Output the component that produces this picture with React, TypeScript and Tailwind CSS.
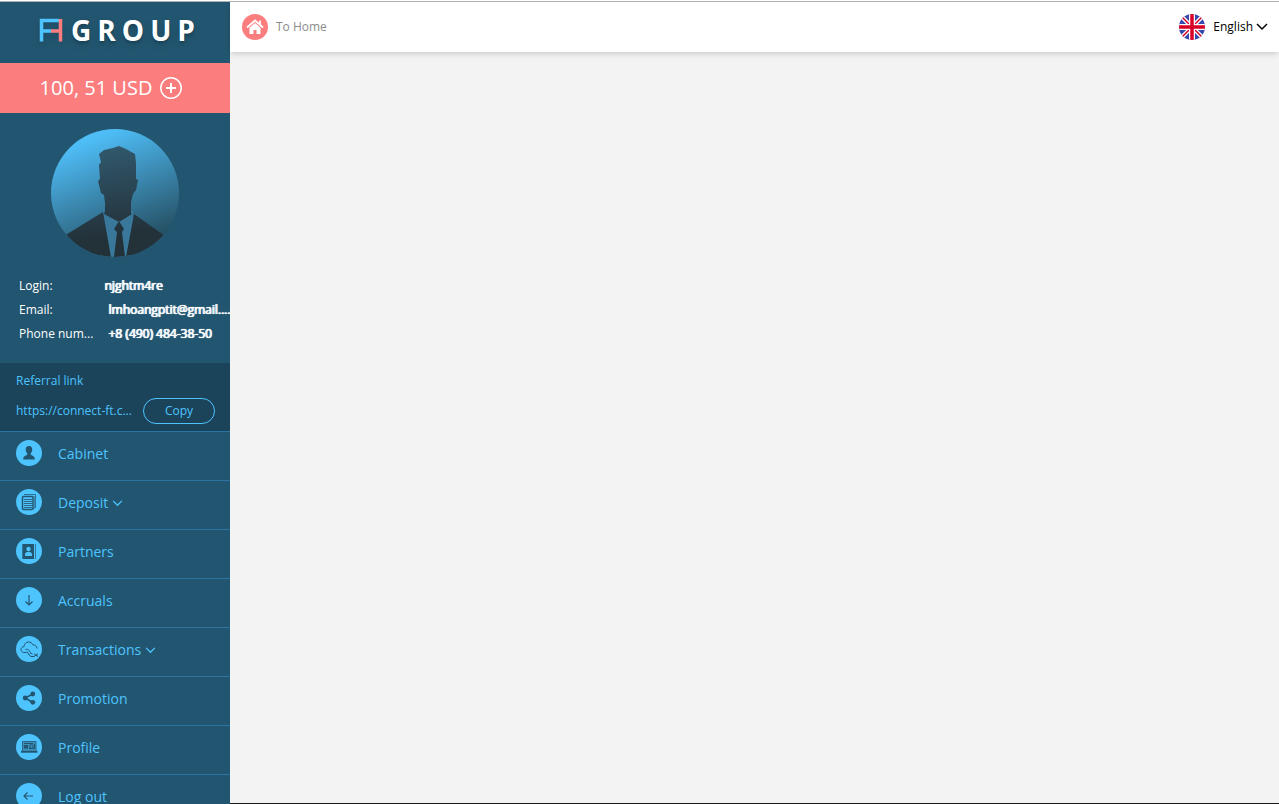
import type { ReactNode } from "react";

interface MenuItem {
  label: string;
  icon: ReactNode;
  expandable?: boolean;
}

const menuItems: MenuItem[] = [
  { label: "Cabinet", icon: <UserIcon /> },
  { label: "Deposit", icon: <DocumentsIcon />, expandable: true },
  { label: "Partners", icon: <ContactsIcon /> },
  { label: "Accruals", icon: <ArrowDownIcon /> },
  { label: "Transactions", icon: <CloudIcon />, expandable: true },
  { label: "Promotion", icon: <ShareIcon /> },
  { label: "Profile", icon: <LaptopIcon /> },
  { label: "Log out", icon: <ArrowLeftIcon /> },
];

function UserIcon() {
  return (
    <svg viewBox="0 0 26 26" className="size-full" fill="#22556f">
      <path d="M13 6c2.300 0 3.300 1.500 3.300 3.600 0 1.500-.7 3-1.500 3.700v1.500c1.800.8 4 1.600 4 4v.7H7.200v-.7c0-2.400 2.200-3.200 4-4v-1.500c-.8-.7-1.500-2.200-1.500-3.700C9.700 7.500 10.700 6 13 6z" />
    </svg>
  );
}

function DocumentsIcon() {
  return (
    <svg viewBox="0 0 26 26" className="size-full" fill="none">
      <path d="M8 5.500h11.500V19" stroke="#2f7194" />
      <path d="M18.500 7v13" stroke="#3a8fbb" />
      <rect
        x="6.500"
        y="7.500"
        width="10.500"
        height="13"
        rx="1"
        fill="#4ec4ff"
        stroke="#22556f"
        strokeWidth="1.500"
      />
      <path
        d="M8 10.500h8M8 12.500h8M8 14.500h8M8 16.500h8M8 18.500h8"
        stroke="#2b6688"
      />
    </svg>
  );
}

function ContactsIcon() {
  return (
    <svg viewBox="0 0 26 26" className="size-full">
      <rect x="7" y="6" width="11" height="15" fill="#22556f" />
      <path d="M6.500 6v15M19.500 6v15" stroke="#3478a0" strokeWidth="1" />
      <circle cx="12.500" cy="11" r="2.200" fill="#4ec4ff" />
      <path d="M9 18v-1.500c0-2 1.500-2.800 3.500-2.800s3.500.8 3.500 2.800V18z" fill="#4ec4ff" />
    </svg>
  );
}

function ArrowDownIcon() {
  return (
    <svg viewBox="0 0 26 26" className="size-full" fill="none" stroke="#22556f">
      <path d="M13 8v10M9.500 14.500L13 18l3.500-3.500" strokeWidth="1.200" />
    </svg>
  );
}

function ArrowLeftIcon() {
  return (
    <svg viewBox="0 0 26 26" className="size-full" fill="none" stroke="#22556f">
      <path d="M17 13H8M11.500 9.500L8 13l3.500 3.500" strokeWidth="1.200" />
    </svg>
  );
}

function CloudIcon() {
  return (
    <svg viewBox="0 0 26 26" className="size-full" fill="none" stroke="#22556f">
      <path d="M10.500 16.500H7.800C6 16.300 5 15 5 13.600c0-1.600 1.200-2.700 2.900-2.900C8.200 8 10 6 12.500 6c2 0 3.500 1 4.200 2.700 2.600-.1 4.300 1.600 4.300 3.800" />
      <path d="M9.500 13.500c1.500-.6 3 0 3.500 1l1.500 2M11 15.500l2 3.500 2 1.500h3M14 17l2.500 1M18 17.800l4 2.700M22 17.800l-4 2.700" />
    </svg>
  );
}

function ShareIcon() {
  return (
    <svg viewBox="0 0 26 26" className="size-full" fill="#22556f">
      <path d="M17 9L9 13l8 4.500" fill="none" stroke="#22556f" strokeWidth="1.500" />
      <circle cx="16.800" cy="9" r="2.400" />
      <circle cx="9.200" cy="13" r="2.400" />
      <circle cx="16.800" cy="17.300" r="2.400" />
    </svg>
  );
}

function LaptopIcon() {
  return (
    <svg viewBox="0 0 26 26" className="size-full" fill="none" stroke="#22556f">
      <path d="M6.500 17V7.500h13.500V17" fill="#3a8fbb" stroke="#2b6688" />
      <path d="M5 17.800h16.500" strokeWidth="1.800" />
      <path d="M8 11h4v3.500H8z" fill="#22556f" stroke="none" />
      <path d="M8 9.500h9M13 14.500h5.500v-4.500" />
      <circle cx="15.500" cy="12.500" r="1.800" />
    </svg>
  );
}

function ChevronIcon({ className }: { className: string }) {
  return (
    <svg
      viewBox="0 0 12 8"
      className={className}
      fill="none"
      stroke="currentColor"
      strokeWidth="1.500"
    >
      <path d="M1 1l5 5 5-5" />
    </svg>
  );
}

function Logo() {
  return (
    <a
      href="#"
      className="flex h-[61px] shrink-0 items-center justify-center gap-2 pb-1.5 pl-1 text-white"
    >
      <svg
        viewBox="0 0 24 24"
        className="size-6 drop-shadow-md"
        fill="none"
        strokeWidth="3.500"
      >
        <path d="M2.500 23.500V2.500H20M4 13h8" stroke="#4ec4ff" />
        <path d="M12 13h8M21.500 1v22.500" stroke="#fb7d7e" />
      </svg>
      <span className="flex gap-1.5 text-[28px] leading-8 font-bold text-shadow-lg">
        <span>G</span>
        <span>R</span>
        <span>O</span>
        <span>U</span>
        <span>P</span>
      </span>
    </a>
  );
}

function Avatar() {
  return (
    <svg viewBox="0 0 128 128" className="mx-auto mt-4 size-32">
      <defs>
        <linearGradient id="avatar-bg" x1="0.3" y1="0" x2="0.7" y2="1">
          <stop offset="0.080" stopColor="#4ebcf5" />
          <stop offset="0.900" stopColor="#265064" />
        </linearGradient>
        <linearGradient id="avatar-man" x1="0.4" y1="0" x2="0.600" y2="1">
          <stop offset="0" stopColor="#31596e" />
          <stop offset="0.800" stopColor="#233139" />
        </linearGradient>
        <clipPath id="avatar-clip">
          <circle cx="64" cy="64" r="64" />
        </clipPath>
      </defs>
      <g clipPath="url(#avatar-clip)">
        <rect width="128" height="128" fill="url(#avatar-bg)" />
        <path d="M52 82L46 128h36V82z" fill="#39789a" />
        <path
          d="M48 25l5-4 9-2 6-2 7 3 9 5 1 9v16l2 1-2 10-3 4-2 8v11l1 1-13 8-15-8 1-3V74l-1-8-3-2-3-12 2-2-1-14 2-3z M52 83L0 115v13h60zM83 85l45 32v11H75z M68 92l-5 8 3 3-3 25h11l-3-25 2-3z"
          fill="url(#avatar-man)"
        />
      </g>
    </svg>
  );
}

function UkFlag() {
  return (
    <svg viewBox="0 0 26 26" className="size-[26px] rounded-full">
      <rect width="26" height="26" fill="#3648ad" />
      <path d="M2 2l22 22M24 2L2 24" stroke="#fff" strokeWidth="4" />
      <path d="M2 2l22 22M24 2L2 24" stroke="#d80027" strokeWidth="1.500" />
      <path d="M13 0v26M0 13h26" stroke="#fff" strokeWidth="6" />
      <path d="M13 0v26M0 13h26" stroke="#d80027" strokeWidth="3.500" />
    </svg>
  );
}

function Sidebar() {
  return (
    <aside className="flex w-[230px] shrink-0 flex-col overflow-hidden bg-[#22556f]">
      <Logo />

      <button
        type="button"
        className="flex h-[50px] shrink-0 items-center justify-center gap-2 bg-[#fb7d7e] pr-2 text-xl text-white"
      >
        100, 51 USD
        <svg
          viewBox="0 0 22 22"
          className="size-[22px]"
          fill="none"
          stroke="currentColor"
        >
          <circle cx="11" cy="11" r="10.200" strokeWidth="1.500" />
          <path d="M11 6v10M6 11h10" strokeWidth="2" />
        </svg>
      </button>

      <div className="h-[250px] shrink-0">
        <Avatar />
        <dl className="mt-[17px] text-xs leading-6 whitespace-nowrap text-white">
          <div className="flex pl-[19px]">
            <dt className="w-[86px] shrink-0">Login:</dt>
            <dd className="text-shadow-[-1px_0_0_#fff,0_0_1px_#fff]">
              njghtm4re
            </dd>
          </div>
          <div className="flex pl-[19px]">
            <dt className="w-[90px] shrink-0">Email:</dt>
            <dd className="text-shadow-[-1px_0_0_#fff,0_0_1px_#fff]">
              lmhoangptit@gmail....
            </dd>
          </div>
          <div className="flex pl-[19px]">
            <dt className="w-[90px] shrink-0">Phone num...</dt>
            <dd className="text-shadow-[-1px_0_0_#fff,0_0_1px_#fff]">
              +8 (490) 484-38-50
            </dd>
          </div>
        </dl>
      </div>

      <div className="h-[68px] shrink-0 bg-[#1b4359] pt-2 pr-[15px] pl-4 text-xs text-[#4ec4ff]">
        <p className="leading-5">Referral link</p>
        <div className="mt-[7px] flex items-center justify-between">
          <span>https://connect-ft.c...</span>
          <button
            type="button"
            className="h-[26px] w-[72px] rounded-full border border-[#4ec4ff]"
          >
            Copy
          </button>
        </div>
      </div>

      <nav>
        {menuItems.map((item) => (
          <a
            key={item.label}
            href="#"
            className="flex h-[49px] items-start gap-4 border-t border-[#2b73a0] px-4 pt-2 text-sm text-[#4ec4ff]"
          >
            <span className="size-[26px] shrink-0 rounded-full bg-[#4ec4ff]">
              {item.icon}
            </span>
            <span className="flex items-center gap-1 leading-7">
              {item.label}
              {item.expandable && <ChevronIcon className="h-[7px] w-[11px]" />}
            </span>
          </a>
        ))}
      </nav>
    </aside>
  );
}

function Header() {
  return (
    <header className="flex h-[50px] items-center justify-between bg-white pr-[11px] pl-3 shadow-md">
      <a href="#" className="flex items-center gap-2 text-xs text-[#8c8c8c]">
        <svg viewBox="0 0 26 26" className="size-[26px]">
          <circle cx="13" cy="13" r="13" fill="#fb7d7e" />
          <path
            d="M5 13.500L13 6.500l8 7M18 6.500v4"
            fill="none"
            stroke="#fff"
            strokeWidth="1.800"
          />
          <path d="M7.500 13.800L13 9l5.500 4.800V20h-4v-4h-3v4h-4z" fill="#fff" />
        </svg>
        To Home
      </a>
      <button
        type="button"
        className="flex items-center gap-2 text-xs text-black"
      >
        <UkFlag />
        <span className="flex items-center gap-[3px] leading-7">
          English
          <ChevronIcon className="h-2 w-3" />
        </span>
      </button>
    </header>
  );
}

const App = () => {
  return (
    <div className="flex h-screen flex-col overflow-hidden bg-white pt-px font-['Open_Sans',sans-serif]">
      <div className="flex min-h-0 flex-1 border-t border-[#b0b0b0]">
        <Sidebar />
        <main className="min-w-0 flex-1 border-b border-[#1a1a1a] bg-[#f3f3f3]">
          <Header />
        </main>
      </div>
    </div>
  );
};

export default App;
